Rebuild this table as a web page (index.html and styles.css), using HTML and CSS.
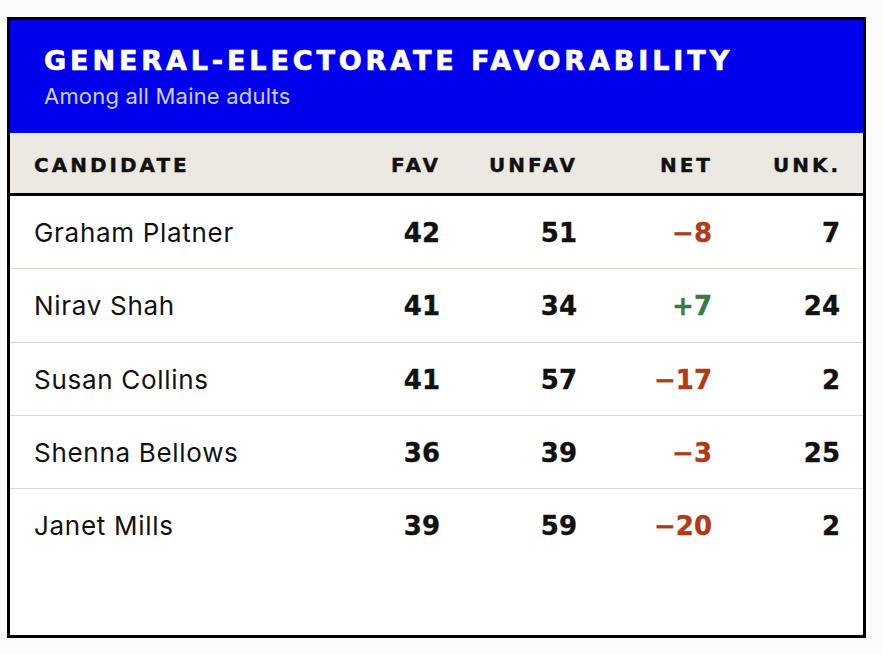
FILE: index.html
```html
<!DOCTYPE html>
<html lang="en">
<head>
<meta charset="utf-8">
<title>General-Electorate Favorability</title>
<link rel="stylesheet" href="styles.css">
</head>
<body>
<div class="page">
  <section class="card">
    <header class="banner">
      <h1 class="title">GENERAL-ELECTORATE FAVORABILITY</h1>
      <p class="subtitle">Among all Maine adults</p>
    </header>
    <div class="table">
      <div class="row head">
        <div class="cell name">CANDIDATE</div>
        <div class="cell num">FAV</div>
        <div class="cell num">UNFAV</div>
        <div class="cell num">NET</div>
        <div class="cell num">UNK.</div>
      </div>
      <div class="body">
        <div class="row">
          <div class="cell name">Graham Platner</div>
          <div class="cell num">42</div>
          <div class="cell num">51</div>
          <div class="cell num neg">−8</div>
          <div class="cell num">7</div>
        </div>
        <div class="row">
          <div class="cell name">Nirav Shah</div>
          <div class="cell num">41</div>
          <div class="cell num">34</div>
          <div class="cell num pos">+7</div>
          <div class="cell num">24</div>
        </div>
        <div class="row">
          <div class="cell name">Susan Collins</div>
          <div class="cell num">41</div>
          <div class="cell num">57</div>
          <div class="cell num neg">−17</div>
          <div class="cell num">2</div>
        </div>
        <div class="row">
          <div class="cell name">Shenna Bellows</div>
          <div class="cell num">36</div>
          <div class="cell num">39</div>
          <div class="cell num neg">−3</div>
          <div class="cell num">25</div>
        </div>
        <div class="row">
          <div class="cell name">Janet Mills</div>
          <div class="cell num">39</div>
          <div class="cell num">59</div>
          <div class="cell num neg">−20</div>
          <div class="cell num">2</div>
        </div>
      </div>
    </div>
  </section>
</div>
</body>
</html>
```
FILE: styles.css
```css
html, body {
  margin: 0;
  padding: 0;
  background: #fbfbf9;
}

.page {
  padding: 17px 0 0 7px;
}

.card {
  box-sizing: border-box;
  width: 859px;
  height: 621px;
  border: 3px solid #000;
  background: #fff;
}

.banner {
  background: #0000ec;
  height: 113px;
  box-sizing: border-box;
  padding: 26px 20px 0 34px;
}

.title {
  margin: 0;
  font-family: "DejaVu Sans", sans-serif;
  font-weight: 700;
  font-size: 27px;
  line-height: 30px;
  letter-spacing: 3.9px;
  color: #fff;
  -webkit-text-stroke: 0.7px #fff;
}

.subtitle {
  margin: 7px 0 0;
  font-family: Inter, "Liberation Sans", sans-serif;
  font-size: 22px;
  line-height: 26px;
  letter-spacing: 0.2px;
  color: #cdcfff;
}

.row {
  display: grid;
  grid-template-columns: 1fr 128px 137px 135px 128px;
  align-items: baseline;
  box-sizing: border-box;
  height: 73.25px;
  padding: 22px 23px 0 24px;
  border-bottom: 1px solid #dad8d1;
}

.row.head {
  height: 63px;
  padding: 22px 23px 0 24px;
  background: #ece9e3;
  border-bottom: 3px solid #000;
}

.body .row:last-child {
  border-bottom-color: transparent;
}

.cell {
  line-height: 30px;
  color: #111;
}

.cell.name {
  font-family: Inter, "Liberation Sans", sans-serif;
  font-size: 26px;
  letter-spacing: 0.7px;
}

.cell.num {
  text-align: right;
  font-family: "DejaVu Sans", sans-serif;
  font-weight: 700;
  font-size: 26px;
  -webkit-text-stroke: 0.35px currentColor;
}

.head .cell.name,
.head .cell.num {
  font-family: "DejaVu Sans", sans-serif;
  font-weight: 700;
  font-size: 20px;
  line-height: 20px;
  letter-spacing: 3px;
  color: #111;
  -webkit-text-stroke: 0.4px #111;
}

.head .cell.num {
  margin-right: -1px;
}

.neg {
  color: #b13b17;
}

.pos {
  color: #3b7a3d;
}
```
